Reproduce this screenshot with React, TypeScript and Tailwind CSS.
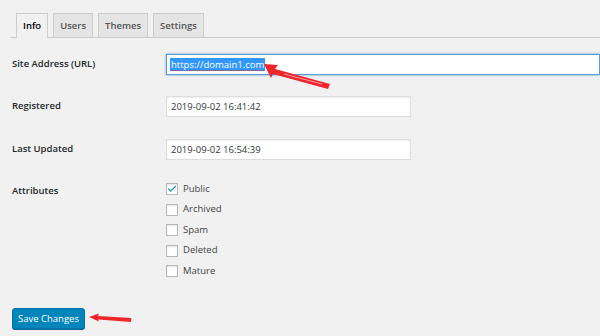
import { Check } from "lucide-react";

const font = { fontFamily: '"Open Sans", "Noto Sans", sans-serif' };

const tabs = ["Info", "Users", "Themes", "Settings"];
const attributes = [
  { label: "Public", checked: true },
  { label: "Archived", checked: false },
  { label: "Spam", checked: false },
  { label: "Deleted", checked: false },
  { label: "Mature", checked: false },
];

const labelClass = "w-[154px] shrink-0 text-[9.5px] font-semibold text-[#23282d]";
const inputClass =
  "h-[21px] w-[245px] border border-[#ddd] bg-white px-[4px] text-[9.5px] leading-[19px] text-[#32373c] shadow-[inset_0_1px_2px_rgba(0,0,0,0.07)]";

function Arrow({ className }: { className: string }) {
  return (
    <svg className={className} viewBox="0 0 70 28" fill="none">
      <path d="M2 2 L16 3 L13 7 L68 22 L66 27 L11 12 L9 16 Z" fill="#f0252a" />
      <path d="M22 12 L60 22" stroke="#fff" strokeWidth="0.8" opacity="0.7" />
    </svg>
  );
}

export default function App() {
  return (
    <div className="relative h-[336px] w-[600px] overflow-hidden bg-[#f1f1f1]" style={font}>
      <div className="ml-[10px] flex items-end gap-[5px] border-b border-[#ccc] pl-[6px] pt-[13px]">
        {tabs.map((t, i) => (
          <div
            key={t}
            className={
              i === 0
                ? "-mb-px border border-b-0 border-[#ccc] bg-[#f1f1f1] px-[6px] text-[9.5px] font-semibold leading-[24px] text-[#000]"
                : "border border-b-0 border-[#ccc] bg-[#e5e5e5] px-[6px] text-[9.5px] font-semibold leading-[23px] text-[#555]"
            }
          >
            {t}
          </div>
        ))}
      </div>

      <div className="pl-[12px] pt-[15px]">
        <div className="flex h-[22px] items-center">
          <div className={labelClass}>Site Address (URL)</div>
          <div className="flex h-[21px] flex-1 items-center border border-[#5b9dd9] bg-white pl-[3px] shadow-[0_0_2px_rgba(30,140,190,0.8)]">
            <span className="bg-[#3297fd] px-px text-[9.5px] leading-[13px] text-white underline decoration-dotted decoration-[#e03030] underline-offset-2">
              https://domain1.com
            </span>
          </div>
        </div>

        <div className="mt-[20px] flex h-[22px] items-center">
          <div className={labelClass}>Registered</div>
          <div className={inputClass}>2019-09-02 16:41:42</div>
        </div>

        <div className="mt-[21px] flex h-[22px] items-center">
          <div className={labelClass}>Last Updated</div>
          <div className={inputClass}>2019-09-02 16:54:39</div>
        </div>

        <div className="mt-[20px] flex">
          <div className={`${labelClass} pt-[4px]`}>Attributes</div>
          <div className="flex flex-col gap-[8.5px] pt-[3px]">
            {attributes.map((a) => (
              <div key={a.label} className="flex h-[12px] items-center gap-[5px]">
                <div className="flex h-[12px] w-[12px] items-center justify-center border border-[#b4b9be] bg-white shadow-[inset_0_1px_2px_rgba(0,0,0,0.1)]">
                  {a.checked && <Check className="h-[10px] w-[10px] text-[#1e8cbe]" strokeWidth={3} />}
                </div>
                <span className="text-[9.5px] text-[#444]">{a.label}</span>
              </div>
            ))}
          </div>
        </div>

        <div className="mt-[27px]">
          <button className="h-[21px] rounded-[3px] border border-[#0073aa] bg-[#0085ba] px-[5px] text-[9.5px] leading-[19px] text-white shadow-[0_1px_0_#006799]">
            Save Changes
          </button>
        </div>
      </div>

      <Arrow className="absolute left-[262px] top-[62px] h-[28px] w-[70px]" />
      <svg className="absolute left-[88px] top-[313px] h-[10px] w-[44px]" viewBox="0 0 44 10" fill="none">
        <path d="M1 4 L11 0.5 L10 3 L43 5 L43 9 L10 6.5 L11 8.5 Z" fill="#f0252a" />
      </svg>
    </div>
  );
}
